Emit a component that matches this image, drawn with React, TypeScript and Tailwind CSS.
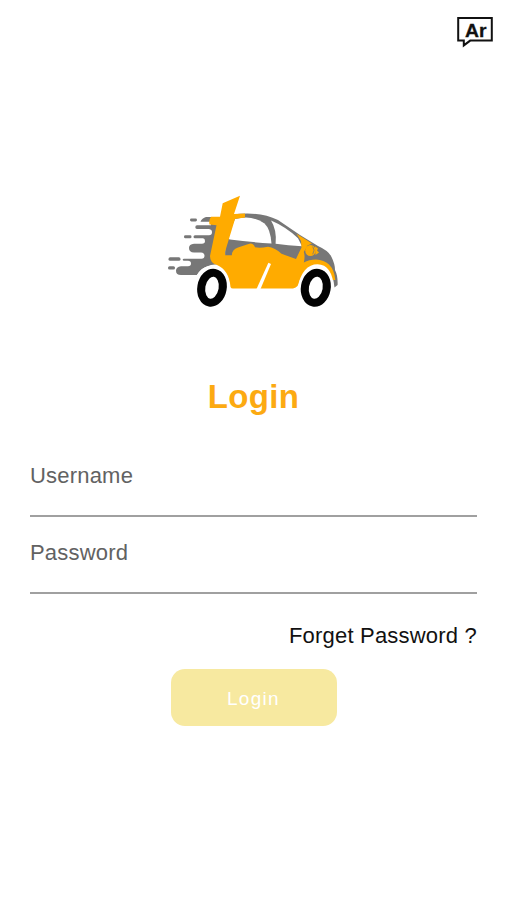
import { useState } from "react"

type T_FieldProps = {
    id: string
    label: string
    type: string
}

function LanguageIcon(): JSX.Element {
    return (
        <svg viewBox="0 0 38 32" className="w-[38px] h-8">
            <path
                d="M2.2 2H35.8V24.6H14.2L7.8 29.4V24.6H2.2Z"
                fill="none"
                stroke="#111"
                strokeWidth="2"
            />
            <text
                x="9"
                y="20.5"
                textLength="21.5"
                lengthAdjust="spacingAndGlyphs"
                fontSize="18"
                fontWeight="700"
                fill="#111"
                stroke="#111"
                strokeWidth="0.3"
                fontFamily="Liberation Sans, sans-serif">
                Ar
            </text>
        </svg>
    )
}

function CarLogo(): JSX.Element {
    return (
        <svg viewBox="160 190 185 120" className="w-[185px] h-[120px]">
            {/* speed trail */}
            <g fill="#777">
                <path d="M212 217H206Q202 218 200.5 221.7H211V225.3H197Q195.3 225.3 195.3 227.2Q195.3 229 197 229H209Q212 229.5 212 232.2Q212 235 209 235.3H195Q193.5 235.3 193.5 236.8Q193.5 238.3 195 238.3H203Q205 238.5 205 241Q205 243.7 202 243.7H194Q189 244 189 248Q189 252.3 194 252.5H201Q204.5 252.8 204.5 255.8Q204.5 258.8 201.5 258.8H184Q182.7 258.8 182.7 259.8Q182.7 260.8 184 260.8H188Q191 261 191 263.5Q191 266.3 188 266.3H181Q176 267 176 270.7Q176 275 181 275H197Q202 267 211 265L219 264V217Z" />
                <rect x="190" y="218.5" width="7" height="3" rx="1.4" />
                <rect x="184" y="235.3" width="7.5" height="3" rx="1.4" />
                <rect x="168.5" y="257.3" width="12" height="3.5" rx="1.6" />
                <rect x="168" y="266.3" width="7" height="3.2" rx="1.5" />
            </g>
            {/* roof and upper body */}
            <path
                d="M240 213.8Q262 212.2 278 220L300 235L318 246Q329 251 331.5 257Q335 264 335 270Q338 276 337.6 285L334.5 287.5L332 272L300 264L225 258L226 215Z"
                fill="#777"
            />
            {/* side windows */}
            <path
                d="M235 219Q240 217.4 246 217.4Q257 218 264.5 223.5Q270.5 229 271.5 243.6Q250 242 230 239.5Q226.5 239 227.5 236Z"
                fill="#fff"
            />
            <path
                d="M271 220.6Q285 226.4 298 238.2L302 246.3Q288 245.3 275.6 243.8Q277 230 271 220.6Z"
                fill="#fff"
            />
            <g fill="#ffab00">
                <path d="M240 195.8L222.7 203.3L220 216.8H211Q208.5 220 209.5 224.4L216.5 225.3L210 256Q210 263 217 265Q229 270 230.5 287Q231 288.5 233 288.5H293Q299 287 299.8 280H335.3Q334.5 270 329 264.5Q324 260 316 259.5Q309 259.5 303.8 262.5Q305.3 256 303.8 252L307.5 245.5L312 243.6L296.5 233.8L301 241L301.5 247.5L296 259L281.5 253.8Q275 247.5 268 246.7Q260 248.5 255 247.3Q253 242.3 248.5 244L238 247.5Q231.5 250 231.9 255.2H225.2L225 252L235 219L245 217.4V213.6L234 214Z" />
                {/* headlight */}
                <ellipse cx="310.4" cy="250.5" rx="5.2" ry="5.6" />
                <path d="M315 246.2L318 248.6L317 250.5L319 252.5L315.5 255Z" />
            </g>
            <path
                d="M312.7 246.5Q315.5 250 312.7 254.3"
                fill="none"
                stroke="#777"
                strokeWidth="0.8"
            />
            {/* door split */}
            <path d="M268.4 262.8L271 264L260.3 289.5H256.3Z" fill="#fff" />
            {/* wheels */}
            <path
                d="M193 289Q195 267 212 265.5Q229 267 230.2 289Z"
                fill="#fff"
            />
            <path
                d="M297.5 289C300 272 308 264.3 317.5 264.3C327 264.3 333.5 273 333.8 289Z"
                fill="#fff"
            />
            <ellipse
                cx="212"
                cy="287.7"
                rx="10.7"
                ry="15.1"
                transform="rotate(10 212 287.7)"
                fill="#fff"
                stroke="#030303"
                strokeWidth="8"
            />
            <ellipse
                cx="315.8"
                cy="287.7"
                rx="10.9"
                ry="15.1"
                transform="rotate(10 315.8 287.7)"
                fill="#fff"
                stroke="#030303"
                strokeWidth="8"
            />
        </svg>
    )
}

function Field(props: T_FieldProps): JSX.Element {
    const [value, setValue] = useState("")

    return (
        <div className="relative h-[77px] w-full border-b-2 border-[#a0a0a0]">
            <input
                id={props.id}
                type={props.type}
                value={value}
                onChange={(e) => setValue(e.target.value)}
                className="h-full w-full pt-8 text-[22px] outline-none"
            />
            {!value && (
                <label
                    htmlFor={props.id}
                    className="absolute left-0 top-[23px] text-[22px] leading-[26px] tracking-[0.2px] text-[#626262]">
                    {props.label}
                </label>
            )}
        </div>
    )
}

export default function App(): JSX.Element {
    return (
        <main className="flex h-[900px] w-[506px] flex-col items-center bg-white font-['Liberation_Sans',sans-serif]">
            <header className="flex h-12 w-full justify-end pt-4 pr-3">
                <button type="button">
                    <LanguageIcon />
                </button>
            </header>
            <div className="mt-[142px] pr-px">
                <CarLogo />
            </div>
            <h1 className="mt-[67px] pl-px text-[33px] leading-10 font-bold tracking-[0.3px] text-[#fcaa12]">
                Login
            </h1>
            <form className="mt-[23px] flex w-full flex-col pr-[29px] pl-[30px]">
                <Field id="username" label="Username" type="text" />
                <Field id="password" label="Password" type="password" />
                <a
                    href="#"
                    className="mt-[29px] self-end text-[22px] leading-[26px] tracking-[0.2px] text-[#111]">
                    Forget Password ?
                </a>
                <button
                    type="button"
                    className="mt-5 h-[57px] w-[166px] self-center rounded-[14px] bg-[#f7e9a0] pt-[3px] text-[19px] tracking-[1.3px] text-white">
                    Login
                </button>
            </form>
        </main>
    )
}
